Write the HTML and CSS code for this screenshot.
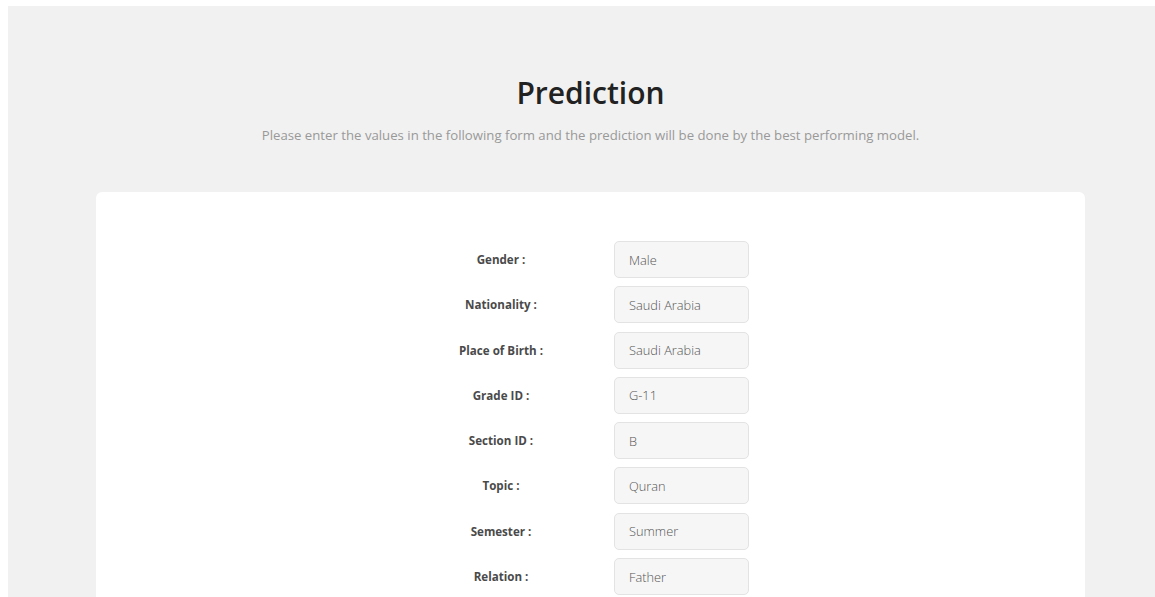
FILE: index.html
```html
<!DOCTYPE html>
<html lang="en">
<head>
<meta charset="utf-8">
<title>Prediction</title>
<link rel="stylesheet" href="styles.css">
</head>
<body>
<section class="predict">
  <h1 class="predict-title">Prediction</h1>
  <p class="predict-lead">Please enter the values in the following form and the prediction will be done by the best performing model.</p>
  <div class="card">
    <form class="form">
      <label class="form-label" for="gender">Gender :</label>
      <input class="form-input" id="gender" type="text" placeholder="Male">
      <label class="form-label" for="nationality">Nationality :</label>
      <input class="form-input" id="nationality" type="text" placeholder="Saudi Arabia">
      <label class="form-label" for="birth">Place of Birth :</label>
      <input class="form-input" id="birth" type="text" placeholder="Saudi Arabia">
      <label class="form-label" for="grade">Grade ID :</label>
      <input class="form-input" id="grade" type="text" placeholder="G-11">
      <label class="form-label" for="section">Section ID :</label>
      <input class="form-input" id="section" type="text" placeholder="B">
      <label class="form-label" for="topic">Topic :</label>
      <input class="form-input" id="topic" type="text" placeholder="Quran">
      <label class="form-label" for="semester">Semester :</label>
      <input class="form-input" id="semester" type="text" placeholder="Summer">
      <label class="form-label" for="relation">Relation :</label>
      <input class="form-input" id="relation" type="text" placeholder="Father">
    </form>
  </div>
</section>
</body>
</html>
```

FILE: styles.css
```css
html, body {
  overflow: hidden;
}

body {
  margin: 6px 0 0 8px;
  font-family: "Open Sans", "Noto Sans", sans-serif;
  background: #fff;
}

.predict {
  width: 1165px;
  min-height: 700px;
  background: #f1f1f1;
  padding: 68px 88px 40px;
  box-sizing: border-box;
  text-align: center;
}

.predict-title {
  margin: 0;
  font-size: 30px;
  font-weight: 600;
  color: #222;
  line-height: 38px;
}

.predict-lead {
  margin: 13px 0 0;
  font-size: 13.2px;
  color: #999;
  line-height: 20px;
}

.card {
  margin-top: 47px;
  background: #fff;
  border-radius: 6px;
  padding: 49px 0 40px;
}

.form {
  display: grid;
  grid-template-columns: 170px 135px;
  column-gap: 28px;
  row-gap: 8.3px;
  justify-content: center;
  padding-right: 16px;
  align-items: center;
}

.form-label {
  font-size: 11.6px;
  font-weight: 700;
  color: #4a4a4a;
  text-align: center;
}

.form-input {
  box-sizing: border-box;
  width: 135px;
  height: 37px;
  padding: 0 14px;
  border: 1px solid #e3e3e3;
  border-radius: 5px;
  background: #f6f6f6;
  font-family: inherit;
  font-size: 12.8px;
  font-weight: 300;
  color: #555;
  outline: none;
}

.form-input::placeholder {
  color: #555;
  opacity: 1;
}
```
